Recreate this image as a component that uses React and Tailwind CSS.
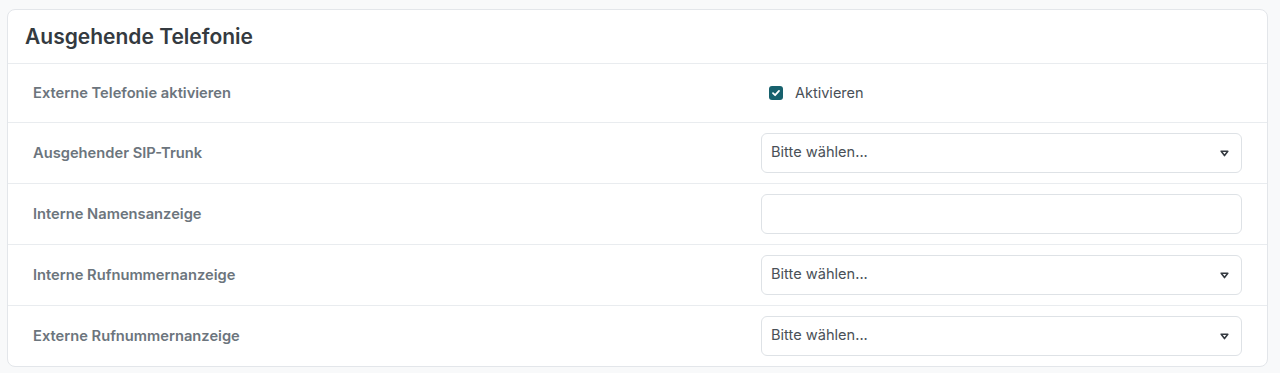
import React, { useState } from 'react';

const rows = [
    { label: 'Externe Telefonie aktivieren', type: 'checkbox' },
    { label: 'Ausgehender SIP-Trunk', type: 'select' },
    { label: 'Interne Namensanzeige', type: 'text' },
    { label: 'Interne Rufnummernanzeige', type: 'select' },
    { label: 'Externe Rufnummernanzeige', type: 'select' },
];

const Arrow = () => (
    <svg width="9" height="7" viewBox="0 0 9 7" className="text-[#343a40]">
        <path d="M1.2 1.2 H7.8 L4.5 5.6 Z" fill="none" stroke="currentColor" strokeWidth="1.6" strokeLinejoin="round" />
    </svg>
);

const Field = ({ type }) => {
    const [checked, setChecked] = useState(true);

    if (type === 'checkbox') {
        return (
            <label className="flex items-center gap-[12px] pl-[8px] text-[14.5px] text-[#495057]">
                <span
                    onClick={() => setChecked(!checked)}
                    className="flex h-[14px] w-[14px] items-center justify-center rounded-[3px] bg-[#17616d]"
                >
                    {checked && (
                        <svg width="10" height="10" viewBox="0 0 10 10">
                            <path d="M2 5.2 L4.1 7.2 L8 2.9" fill="none" stroke="#fff" strokeWidth="1.8" strokeLinecap="round" strokeLinejoin="round" />
                        </svg>
                    )}
                </span>
                Aktivieren
            </label>
        );
    }

    if (type === 'select') {
        return (
            <div className="flex h-[40px] items-center justify-between rounded-[6px] border border-[#dee2e6] bg-white pl-[9px] pr-[12px] text-[14.6px] text-[#495057]">
                <span>Bitte wählen...</span>
                <Arrow />
            </div>
        );
    }

    return <input type="text" className="h-[40px] w-full rounded-[6px] border border-[#dee2e6] bg-white px-[9px] text-[14.6px] outline-none" />;
};

export default function App() {
    return (
        <div className="min-h-[373px] bg-[#f8f9fa] pt-[9px] pl-[7px]" style={{ fontFamily: '"Inter", "Noto Sans", sans-serif' }}>
            <div className="w-[1261px] rounded-[8px] border border-[#e3e6ea] bg-white">
                <div className="flex h-[54px] items-center border-b border-[#e9ecef] px-[17px]">
                    <h2 className="text-[21px] font-semibold text-[#343a40]">Ausgehende Telefonie</h2>
                </div>
                {rows.map((row, i) => (
                    <div
                        key={row.label}
                        className={`flex items-center justify-between px-[25px] ${i === 0 ? 'h-[58px]' : 'h-[61px] border-t border-[#e9ecef]'}`}
                    >
                        <span className="text-[14.7px] font-semibold text-[#6c757d]">{row.label}</span>
                        <div className="w-[481px]">
                            <Field type={row.type} />
                        </div>
                    </div>
                ))}
            </div>
        </div>
    );
}
